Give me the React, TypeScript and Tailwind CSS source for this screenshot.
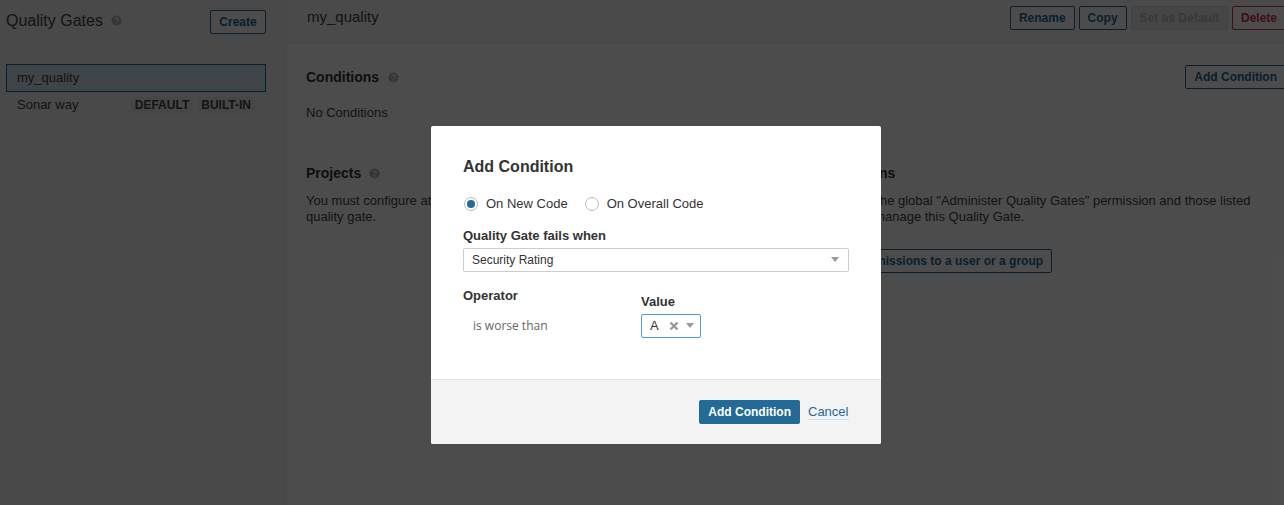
import React from 'react';

const sans = 'font-["Liberation_Sans",Arial,sans-serif]';

function HelpIcon({ className = '' }: { className?: string }) {
  return (
    <svg viewBox="0 0 12 12" width="11" height="11" className={className}>
      <circle cx="6" cy="6" r="5.5" fill="#b4b4b4" />
      <path
        d="M4.2 4.7c0-1 .8-1.7 1.9-1.7s1.8.7 1.8 1.6c0 1.3-1.5 1.2-1.5 2.3"
        fill="none"
        stroke="#fff"
        strokeWidth="1.3"
      />
      <rect x="5.6" y="7.9" width="1.4" height="1.4" fill="#fff" />
    </svg>
  );
}

function OutlineButton({ children, className = '' }: { children: React.ReactNode; className?: string }) {
  return (
    <button className={`h-6 px-[8px] border border-[#236a97] rounded-[2px] bg-white text-[#236a97] text-xs font-bold leading-[22px] whitespace-nowrap ${className}`}>
      {children}
    </button>
  );
}

function Caret() {
  return <span className="w-0 h-0 border-x-[4px] border-x-transparent border-t-[5px] border-t-[#999]" />;
}

function Badge({ children }: { children: React.ReactNode }) {
  return (
    <span className="h-[16px] px-[4px] rounded-[2px] bg-[#ececec] text-[#444] text-xs font-bold leading-[16px]">
      {children}
    </span>
  );
}

function Sidebar() {
  return (
    <aside className="w-[287px] shrink-0 bg-[#f3f3f3] border-r border-[#f0f0f0] pl-[6px] pr-[20px]">
      <div className="flex justify-between pt-[10px] h-[64px] items-start">
        <h1 className="flex items-center gap-[8px] text-base leading-[21px] text-[#444]">
          Quality Gates <HelpIcon />
        </h1>
        <OutlineButton className="w-[56px]">Create</OutlineButton>
      </div>
      <div className="h-[28px] border border-[#236a97] bg-[#cfe3ef] pl-[10px] text-[13px] leading-[26px] text-[#444]">
        my_quality
      </div>
      <div className="flex items-center justify-between h-[26px] pl-[11px] pr-[11px] text-[13px] text-[#444]">
        <span>Sonar way</span>
        <span className="flex gap-[4px]">
          <Badge>DEFAULT</Badge>
          <Badge>BUILT-IN</Badge>
        </span>
      </div>
    </aside>
  );
}

function MainPanel() {
  return (
    <main className="w-[999px] shrink-0 bg-white">
      <header className="h-[44px] bg-[#f8f8f8] border-b border-[#eee] flex items-center justify-between pl-[20px]">
        <span className="text-[15px] text-[#444] -mt-[8px]">my_quality</span>
        <div className="flex gap-[4px] -mt-[8px]">
          <OutlineButton>Rename</OutlineButton>
          <OutlineButton>Copy</OutlineButton>
          <button className="h-6 px-[8px] border border-[#ddd] rounded-[2px] bg-[#ebebeb] text-[#bbb] text-xs font-bold">
            Set as Default
          </button>
          <button className="h-6 px-[8px] border border-[#d4333f] rounded-[2px] bg-white text-[#d4333f] text-xs font-bold">
            Delete
          </button>
        </div>
      </header>
      <div className="pl-[19px] pt-[21px]">
        <div className="flex items-center justify-between">
          <h2 className="flex items-center gap-[9px] text-sm font-bold text-[#333] leading-6">
            Conditions <HelpIcon />
          </h2>
          <OutlineButton>Add Condition</OutlineButton>
        </div>
        <p className="mt-[12px] text-[13px] leading-[24px] text-[#444]">No Conditions</p>
        <div className="flex mt-[36px]">
          <section className="w-[506px] shrink-0">
            <h2 className="flex items-center gap-[8px] text-sm font-bold text-[#333] leading-6">
              Projects <HelpIcon />
            </h2>
            <p className="mt-[8px] text-[13px] leading-4 text-[#444]">
              You must configure at least one condition before using this
              <br />
              quality gate.
            </p>
          </section>
          <section>
            <h2 className="text-sm font-bold text-[#333] leading-6">Permissions</h2>
            <p className="mt-[8px] text-[13px] leading-4 text-[#444] whitespace-nowrap">
              Users with the global "Administer Quality Gates" permission and those listed
              <br />
              below can manage this Quality Gate.
            </p>
            <OutlineButton className="mt-[24px]">Grant permissions to a user or a group</OutlineButton>
          </section>
        </div>
      </div>
    </main>
  );
}

function Radio({ checked, label }: { checked?: boolean; label: string }) {
  return (
    <span className="flex items-center gap-[8px]">
      <span className="w-[14px] h-[14px] rounded-full border border-[#bbb] flex items-center justify-center">
        {checked && <span className="w-[8px] h-[8px] rounded-full bg-[#236a97]" />}
      </span>
      <span className="text-[13px] text-[#333]">{label}</span>
    </span>
  );
}

function Modal() {
  return (
    <div className="w-[450px] h-[318px] bg-white rounded-[2px] flex flex-col">
      <div className="flex-1 px-[32px] pt-[30px]">
        <h2 className="text-base font-bold leading-[21px] text-[#333]">Add Condition</h2>
        <div className="flex gap-[17px] mt-[17px] pl-[1px]">
          <Radio checked label="On New Code" />
          <Radio label="On Overall Code" />
        </div>
        <label className="block mt-[14px] text-[13px] font-bold leading-[16px] text-[#333]">
          Quality Gate fails when
        </label>
        <div className="mt-[4px] w-[386px] h-[24px] border border-[#cdcdcd] rounded-[2px] flex items-center justify-between pl-[8px] pr-[9px] text-xs text-[#333]">
          Security Rating
          <Caret />
        </div>
        <div className="flex mt-[16px]">
          <div className="w-[178px]">
            <div className="text-[13px] font-bold leading-[16px] text-[#333]">Operator</div>
            <div className='mt-[14px] pl-[10px] text-xs leading-[16px] text-[#666] font-["Open_Sans",sans-serif]'>
              is worse than
            </div>
          </div>
          <div className="pt-[6px]">
            <div className="text-[13px] font-bold leading-[16px] text-[#333]">Value</div>
            <div className="mt-[4px] w-[60px] h-[24px] border border-[#4b9fd5] rounded-[2px] flex items-center pl-[8px] pr-[6px] text-[13px] text-[#333]">
              <span className="flex-1">A</span>
              <svg viewBox="0 0 10 10" width="10" height="10" className="mr-[7px]">
                <path d="M1.5 1.5l7 7M8.5 1.5l-7 7" stroke="#999" strokeWidth="2.4" />
              </svg>
              <Caret />
            </div>
          </div>
        </div>
      </div>
      <footer className="h-[65px] bg-[#f3f3f3] border-t border-[#e6e6e6] flex items-center justify-end gap-[8px] pr-[32px] rounded-b-[2px]">
        <button className="h-6 px-[9px] rounded-[2px] bg-[#236a97] text-white text-xs font-bold">
          Add Condition
        </button>
        <a className="inline-block w-[41px] text-[13px] text-[#236a97] border-b border-[#cae3f2] leading-[15px]">Cancel</a>
      </footer>
    </div>
  );
}

export default function App() {
  return (
    <div className={`relative h-[505px] w-[1284px] overflow-hidden flex bg-white ${sans}`}>
      <Sidebar />
      <MainPanel />
      <div className="absolute inset-0 bg-black/70 flex justify-center items-start pt-[126px] pl-[28px]">
        <Modal />
      </div>
    </div>
  );
}
